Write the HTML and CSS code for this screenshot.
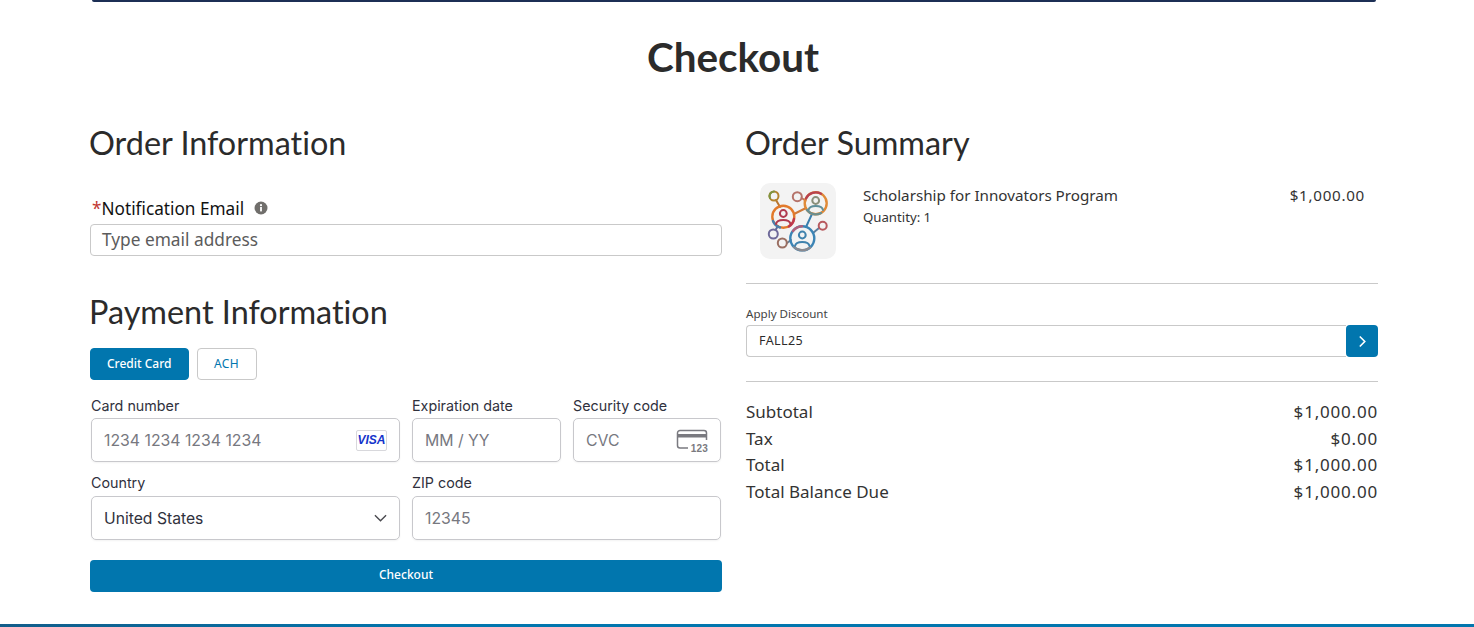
FILE: index.html
```html
<!DOCTYPE html>
<html lang="en">
<head>
<meta charset="utf-8">
<title>Checkout</title>
<link rel="stylesheet" href="styles.css">
</head>
<body>
<div class="page">
  <header class="header">
    <div class="topbar"></div>
    <h1 class="title">Checkout</h1>
  </header>
  <main class="columns">
    <section class="col-left">
      <h2 class="heading">Order Information</h2>
      <div class="email-label"><span class="req">*</span><span>Notification Email</span>
        <svg class="info" viewBox="0 0 14 14" width="14" height="14"><circle cx="7" cy="7" r="6.5" fill="#706e6b"/><rect x="6.1" y="6" width="1.8" height="4.4" fill="#fff"/><circle cx="7" cy="4.2" r="1.1" fill="#fff"/></svg>
      </div>
      <div class="email-input">Type email address</div>
      <h2 class="heading pay-heading">Payment Information</h2>
      <div class="tabs">
        <button class="tab tab-active">Credit Card</button>
        <button class="tab tab-ach">ACH</button>
      </div>
      <div class="stripe-row">
        <div class="field f-card">
          <label class="f-label">Card number</label>
          <div class="f-box"><span class="f-text">1234 1234 1234 1234</span>
            <span class="visa">VISA</span>
          </div>
        </div>
        <div class="field f-half">
          <label class="f-label">Expiration date</label>
          <div class="f-box"><span class="f-text">MM / YY</span></div>
        </div>
        <div class="field f-half f-sec">
          <label class="f-label">Security code</label>
          <div class="f-box"><span class="f-text">CVC</span>
            <span class="cvc-wrap">
              <svg class="cvc-icon" viewBox="0 0 32 22" width="32" height="22"><path d="M12 19H4a2.500 2.500 0 0 1-2.500-2.500V4A2.500 2.500 0 0 1 4 1.500h24A2.500 2.500 0 0 1 30.500 4v7" fill="none" stroke="#7a7a80" stroke-width="1.500"/><rect x="1.500" y="5" width="29" height="3.500" fill="#7a7a80"/></svg>
              <span class="cvc-num">123</span>
            </span>
          </div>
        </div>
      </div>
      <div class="stripe-row row-two">
        <div class="field f-card">
          <label class="f-label">Country</label>
          <div class="f-box f-value"><span class="f-text">United States</span>
            <svg class="chev" viewBox="0 0 14 8" width="13" height="8"><path d="M1 1l6 6 6-6" fill="none" stroke="#4a4a4f" stroke-width="1.500"/></svg>
          </div>
        </div>
        <div class="field f-zip">
          <label class="f-label">ZIP code</label>
          <div class="f-box"><span class="f-text">12345</span></div>
        </div>
      </div>
      <button class="checkout-btn">Checkout</button>
    </section>
    <section class="col-right">
      <h2 class="heading">Order Summary</h2>
      <div class="item">
        <div class="thumb">
          <svg viewBox="0 0 76 76" width="76" height="76">
            <g fill="none" stroke-width="2" stroke-linecap="round">
              <path d="M16 17l4 7" stroke="#b9762f"/>
              <path d="M41.500 15l4 2.500" stroke="#c0705a"/>
              <path d="M34 31l12-6" stroke="#cf7a3a"/>
              <path d="M52 31l-6 13" stroke="#3a7fae"/>
              <path d="M53 50l6-5" stroke="#5a7fa0"/>
              <path d="M18 43l-2.500 4" stroke="#5c6a9a"/>
              <path d="M27 60l4-3" stroke="#6f7f90"/>
              <circle cx="14" cy="13" r="4.500" stroke="#b5832e"/>
              <path d="M10 15a4.500 4.500 0 0 1 4-6.500" stroke="#7f9440"/>
              <circle cx="37.300" cy="13.700" r="4.500" stroke="#b5736a"/>
              <circle cx="55.700" cy="20.300" r="11" stroke="#e08a38" stroke-width="2.400"/>
              <path d="M46 15.500a11 11 0 0 1 15-4.800" stroke="#b8414f" stroke-width="2.400"/>
              <path d="M47 27a11 11 0 0 0 14 3" stroke="#6a8f90" stroke-width="2.400"/>
              <circle cx="23.300" cy="33.700" r="11" stroke="#e27a2c" stroke-width="2.400"/>
              <path d="M34 36a11 11 0 0 1-5 7.500" stroke="#c0394f" stroke-width="2.400"/>
              <path d="M13 38a11 11 0 0 0 7 6.500" stroke="#4a7fae" stroke-width="2.400"/>
              <circle cx="42.300" cy="55.300" r="12" stroke="#3b84b5" stroke-width="2.400"/>
              <path d="M33 48a12 12 0 0 1 9-4.700" stroke="#b2607a" stroke-width="2.400"/>
              <path d="M34 64a12 12 0 0 0 16 .5" stroke="#8a8a90" stroke-width="2.400"/>
              <circle cx="62.700" cy="42.700" r="4" stroke="#b85a5f"/>
              <circle cx="13.300" cy="51" r="4.500" stroke="#6f6a9a"/>
              <circle cx="22.300" cy="60" r="4.500" stroke="#9a6f62"/>
              <circle cx="55.700" cy="17.500" r="3.400" stroke="#8a8f7a"/>
              <path d="M48.500 27c1-5.500 13.500-5.500 14.500 0" stroke="#5f8f9a"/>
              <circle cx="23.300" cy="30.500" r="3.400" stroke="#b0394f"/>
              <path d="M16 41c1-5.500 13.500-5.500 14.500 0" stroke="#b0394f"/>
              <circle cx="42.300" cy="52" r="3.400" stroke="#3f82ad"/>
              <path d="M35 63c1-5.500 13.500-5.500 14.500 0" stroke="#3f82ad"/>
            </g>
          </svg>
        </div>
        <div class="item-text">
          <div class="item-name">Scholarship for Innovators Program</div>
          <div class="item-qty">Quantity: 1</div>
        </div>
        <div class="item-price">$1,000.00</div>
      </div>
      <hr class="rule rule-one">
      <div class="discount-label">Apply Discount</div>
      <div class="discount">
        <div class="discount-input">FALL25</div>
        <button class="discount-btn" aria-label="Apply">
          <svg viewBox="0 0 10 14" width="9" height="13"><path d="M2 1.500l5.500 5.500L2 12.500" fill="none" stroke="#fff" stroke-width="1.800"/></svg>
        </button>
      </div>
      <hr class="rule rule-two">
      <dl class="totals">
        <div class="total-row"><dt>Subtotal</dt><dd>$1,000.00</dd></div>
        <div class="total-row"><dt>Tax</dt><dd>$0.00</dd></div>
        <div class="total-row"><dt>Total</dt><dd>$1,000.00</dd></div>
        <div class="total-row"><dt>Total Balance Due</dt><dd>$1,000.00</dd></div>
      </dl>
    </section>
  </main>
  <div class="bottombar"></div>
</div>
</body>
</html>
```
FILE: styles.css
```css
* { box-sizing: border-box; }
html, body { margin: 0; padding: 0; height: 100%; overflow: hidden; background: #fff; }
body { font-family: "Noto Sans", "Open Sans", sans-serif; color: #2b2b2b; }
.page { height: 627px; display: flex; flex-direction: column; }
.header { width: 1468px; flex: none; }
.topbar { width: 1284px; height: 2px; margin: 0 auto; background: #1c2f55; border-radius: 0 0 4px 4px; }
.title { margin: 0; height: 102px; padding: 30px 2px 0 0; font: 700 40.400px/50px Lato, sans-serif; color: #2b2b2b; text-align: center; }
.columns { display: flex; gap: 24px; padding: 0 96px 0 90px; flex: 1; }
.col-left, .col-right { width: 632px; flex: none; padding-top: 20px; }
.heading { margin: 0 0 0 -1px; height: 38px; font: 400 32.400px/38px Lato, sans-serif; color: #2b2b2b; font-variant-ligatures: none; }
.email-label { margin-top: 35px; display: flex; align-items: center; font-size: 17.200px; line-height: 24px; color: #111; height: 24px; padding-left: 2px; }
.req { color: #c23934; }
.info { margin-left: 10px; margin-top: -3px; }
.email-input { margin-top: 3px; height: 32px; border: 1px solid #c9c9c9; border-radius: 4px; padding: 0 11px; font-size: 17.300px; line-height: 29px; color: #5c5c5c; }
.pay-heading { margin-top: 37px; }
.tabs { margin-top: 17px; display: flex; gap: 8px; }
.tab { height: 32px; padding: 0 16px; border: 1px solid #c9c9c9; border-radius: 4px; background: #fff; color: #0176ae; font: 400 12px/30px "Noto Sans", sans-serif; }
.tab-ach { letter-spacing: .4px; padding: 0 16.500px; }
.tab-active { background: #0176ae; border-color: #0176ae; color: #fff; font-weight: 500; }
.stripe-row { display: flex; gap: 12px; margin-top: 17px; padding-left: 1px; width: 631px; }
.row-two { margin-top: 12px; }
.field { display: flex; flex-direction: column; }
.f-card { width: 309px; flex: none; }
.f-half { width: 149px; flex: none; }
.f-sec { width: 148px; }
.f-zip { width: 309px; flex: none; }
.f-label { font: 400 14.300px/18px Inter, sans-serif; color: #30313d; margin-bottom: 3px; height: 18px; }
.row-two .f-label { margin-bottom: 4px; }
.f-box { height: 44px; border: 1px solid #c8c8cc; border-radius: 5px; padding: 0 12px; display: flex; align-items: center; justify-content: space-between; font: 400 15.800px/20px Inter, sans-serif; color: #77787f; box-shadow: 0 1px 2px rgba(0,0,0,.05); }
.f-text { padding-top: 2px; }
.f-value { color: #30313d; font-size: 15.700px; }
.visa { width: 31px; height: 21px; border: 1px solid #d8d8dc; border-radius: 2px; font: italic 700 12px/19px "Liberation Sans", sans-serif; color: #1434cb; text-align: center; }
.cvc-wrap { position: relative; width: 32px; height: 22px; display: block; }
.cvc-icon { display: block; }
.cvc-num { position: absolute; right: 0; bottom: -3px; font: 700 10px/11px "Liberation Sans", sans-serif; letter-spacing: .2px; color: #7a7a80; background: #fff; padding-left: 1px; }
.checkout-btn { margin-top: 20px; width: 632px; height: 32px; border: 0; border-radius: 4px; background: #0176ae; color: #fff; font: 500 12px/30px "Noto Sans", sans-serif; display: block; padding: 0 0 2px; }
.item { margin-top: 21px; display: flex; height: 80px; padding-left: 14px; padding-right: 13px; }
.thumb { width: 76px; height: 76px; background: #f3f3f3; border-radius: 10px; flex: none; }
.item-text { margin-left: 27px; flex: 1; padding-top: 2px; }
.item-name { font-size: 15.200px; line-height: 20px; color: #333; }
.item-qty { font-size: 13.200px; line-height: 16px; margin-top: 4px; color: #333; }
.item-price { font-size: 15.200px; line-height: 20px; padding-top: 2px; color: #333; letter-spacing: .7px; }
.rule { margin: 0; border: 0; border-top: 1px solid #c9c9c9; }
.rule-one { margin-top: 20px; }
.discount-label { margin-top: 22px; font-size: 11.600px; line-height: 16px; color: #444; }
.discount { margin-top: 3px; display: flex; height: 32px; }
.discount-input { flex: 1; border: 1px solid #c9c9c9; border-right: 0; border-radius: 4px 0 0 4px; padding: 0 12px; font-size: 12.500px; line-height: 30px; color: #2b2b2b; letter-spacing: .4px; }
.discount-btn { width: 32px; height: 32px; border: 0; padding: 0; background: #0176ae; border-radius: 4px; display: flex; align-items: center; justify-content: center; }
.rule-two { margin-top: 24px; }
.totals { margin: 17px 0 0; }
.total-row { display: flex; justify-content: space-between; font-size: 17px; line-height: 26.600px; color: #333; }
.total-row dd { margin: 0; letter-spacing: .8px; }
.bottombar { height: 3px; background: linear-gradient(90deg, #125d8a, #0176ae 30%, #0176ae); flex: none; }
```
